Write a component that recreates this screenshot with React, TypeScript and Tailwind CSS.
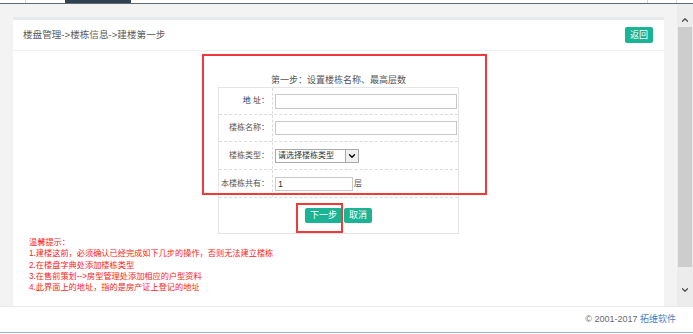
import { ChevronDown, ChevronUp } from 'lucide-react';

const FONT = "font-['Liberation_Sans','Noto_Sans_CJK_SC',sans-serif]";

const TIPS = [
  '温馨提示：',
  '1.建楼这前，必须确认已经完成如下几步的操作，否则无法建立楼栋',
  '2.在楼盘字典处添加楼栋类型',
  '3.在售前策划-->房型管理处添加相应的户型资料',
  '4.此界面上的地址，指的是房产证上登记的地址',
];

function Row({ label, dark, last, children }: { label: string; dark?: boolean; last?: boolean; children: React.ReactNode }) {
  return (
    <div className={`grid grid-cols-[54px_1fr] ${last ? 'h-[28px]' : 'h-[27px]'} border-b border-dashed border-[#dcdcdc]`}>
      <div className={`flex items-center justify-end pr-[3px] border-r border-dashed border-[#dcdcdc] text-[8px] ${dark ? 'text-[#2d3a4a]' : 'text-[#555]'}`}>
        {label}
      </div>
      <div className="flex items-center pl-[2px]">{children}</div>
    </div>
  );
}

export default function App() {
  return (
    <div className={`w-[693px] h-[334px] overflow-hidden bg-white ${FONT}`}>
      {/* tab strip */}
      <div className="flex h-[4px] border-b border-[#5d6b79] bg-white">
        <div className="w-[26px] border-r border-[#d6d6d6]" />
        <div className="w-[39px]" />
        <div className="w-[66px] bg-[#2f4050]" />
        <div className="flex-1 border-r border-[#d6d6d6]" />
        <div className="w-[29px] border-r border-[#d6d6d6]" />
        <div className="w-[16px]" />
      </div>

      <div className="flex h-[302px]">
        {/* frame content */}
        <div className="flex-1 overflow-hidden bg-[#f3f3f4] px-[13px] pt-[13px]">
          <div className="h-full border-t-[3px] border-[#e7eaec] bg-white">
            <div className="flex h-[31px] items-center justify-between border-b border-[#eef0f2] pl-[10px] pr-[11px]">
              <span className="text-[9.6px] text-[#5a5a5a]">楼盘管理-&gt;楼栋信息-&gt;建楼第一步</span>
              <button className="h-[16px] rounded-[2px] bg-[#1ab394] px-[5px] text-[9px] leading-[16px] text-white">返回</button>
            </div>

            <div className="relative pt-[23px]">
              <div className="h-[13px] text-center text-[9px] leading-[13px] text-[#555]">第一步：设置楼栋名称、最高层数</div>
              <div className="mx-auto w-[241px] border border-[#e4e4e4]">
                <Row label="地 址：" dark>
                  <input readOnly className="h-[15px] w-[182px] border border-[#c9c9c9] outline-none" />
                </Row>
                <Row label="楼栋名称：">
                  <input readOnly className="h-[14px] w-[182px] border border-[#c9c9c9] outline-none" />
                </Row>
                <Row label="楼栋类型：" last>
                  <div className="flex h-[14px] w-[84px] border border-[#a9a9a9] bg-white">
                    <span className="flex-1 pl-[2px] text-[8px] leading-[12px] text-[#333]">请选择楼栋类型</span>
                    <span className="flex w-[13px] items-center justify-center border-l border-[#a9a9a9] bg-[#f0f0f0]">
                      <ChevronDown className="h-[10px] w-[10px] text-black" strokeWidth={3} />
                    </span>
                  </div>
                </Row>
                <Row label="本楼栋共有：" last>
                  <input readOnly defaultValue="1" className="h-[14px] w-[78px] border border-[#c9c9c9] px-[2px] text-[9px] text-[#333] outline-none" />
                  <span className="ml-[1px] text-[8px] text-[#555]">层</span>
                </Row>
                <div className="flex h-[35px] items-center justify-center gap-[2px]">
                  <button className="h-[15px] rounded-[2px] bg-[#1ab394] px-[5px] text-[9px] leading-[15px] text-white">下一步</button>
                  <button className="h-[15px] rounded-[2px] bg-[#1ab394] px-[5px] text-[9px] leading-[15px] text-white">取消</button>
                </div>
              </div>

              <div className="mt-[3px] pl-[16px] text-[8.2px] leading-[11.25px] text-[#ff2222]">
                {TIPS.map((t) => (
                  <div key={t}>{t}</div>
                ))}
              </div>

              {/* annotation boxes */}
              <div className="pointer-events-none absolute left-[189px] top-[3px] h-[141px] w-[285px] border-2 border-[#f03a3a]" />
              <div className="pointer-events-none absolute left-[283px] top-[152px] h-[30px] w-[47px] border-2 border-[#f03a3a]" />
            </div>
          </div>
        </div>

        {/* scrollbar */}
        <div className="flex w-[16px] flex-col bg-[#ececec]">
          <div className="flex h-[23px] items-end justify-center pb-[2px]">
            <ChevronUp className="h-[10px] w-[10px] text-[#505050]" strokeWidth={3} />
          </div>
          <div className="mx-[1px] h-[240px] bg-[#cdcdcd]" />
          <div className="flex-1" />
          <div className="flex h-[23px] items-start justify-center pt-[2px]">
            <ChevronDown className="h-[10px] w-[10px] text-[#505050]" strokeWidth={3} />
          </div>
        </div>
      </div>

      {/* footer */}
      <div className="flex h-[26px] items-center justify-end border-t border-[#e7eaec] pr-[17px] text-[9px]">
        <span className="text-[#676a6c]">© 2001-2017&nbsp;</span>
        <span className="text-[#4a7fc1]">拓维软件</span>
      </div>
      <div className="h-[1px] bg-[#9fb3cc]" />
    </div>
  );
}
